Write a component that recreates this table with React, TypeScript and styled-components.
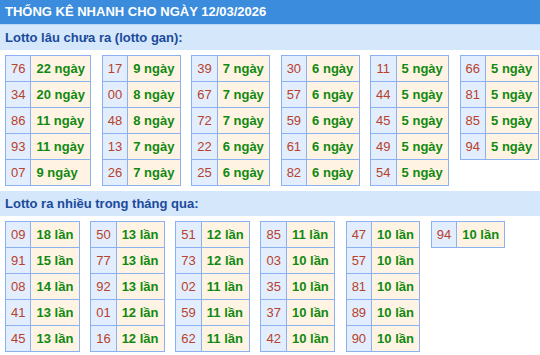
import React from "react";
import styled, { createGlobalStyle } from "styled-components";

const GlobalStyle = createGlobalStyle`
	body {
		margin: 0;
		background: #ffffff;
		font-family: "Liberation Sans", Arial, sans-serif;
	}
`;

type Pair = [string, string];

const ganColumns: Pair[][] = [
	[["76", "22"], ["34", "20"], ["86", "11"], ["93", "11"], ["07", "9"]],
	[["17", "9"], ["00", "8"], ["48", "8"], ["13", "7"], ["26", "7"]],
	[["39", "7"], ["67", "7"], ["72", "7"], ["22", "6"], ["25", "6"]],
	[["30", "6"], ["57", "6"], ["59", "6"], ["61", "6"], ["82", "6"]],
	[["11", "5"], ["44", "5"], ["45", "5"], ["49", "5"], ["54", "5"]],
	[["66", "5"], ["81", "5"], ["85", "5"], ["94", "5"]],
];

const freqColumns: Pair[][] = [
	[["09", "18"], ["91", "15"], ["08", "14"], ["41", "13"], ["45", "13"]],
	[["50", "13"], ["77", "13"], ["92", "13"], ["01", "12"], ["16", "12"]],
	[["51", "12"], ["73", "12"], ["02", "11"], ["59", "11"], ["62", "11"]],
	[["85", "11"], ["03", "10"], ["35", "10"], ["37", "10"], ["42", "10"]],
	[["47", "10"], ["57", "10"], ["81", "10"], ["89", "10"], ["90", "10"]],
	[["94", "10"]],
];

const Page = styled.div`
	width: 540px;
`;

const TitleBar = styled.div`
	height: 24px;
	padding-left: 5px;
	background: #3b8cdd;
	border-bottom: 1px solid #b9d6f5;
	color: #ffffff;
	font-size: 13px;
	font-weight: bold;
	line-height: 24px;
	white-space: nowrap;
`;

const SectionTitle = styled.div`
	height: 25px;
	padding-left: 5px;
	background: #d4e7fb;
	color: #1b4a9c;
	font-size: 13px;
	font-weight: bold;
	line-height: 25px;
`;

const TableRow = styled.div`
	display: flex;
	align-items: flex-start;
	gap: 10.5px;
	padding: 5px;
`;

const Table = styled.table`
	border-collapse: collapse;
	font-size: 13px;
`;

const NumCell = styled.td`
	height: 25px;
	padding: 0 5px;
	border: 1px solid #8cb1f1;
	background: #e2eefe;
	color: #b8412a;
	text-align: center;
	white-space: nowrap;
`;

const ValueCell = styled.td`
	height: 25px;
	padding: 0 5.3px 0 5px;
	border: 1px solid #8cb1f1;
	background: #fff4e3;
	color: #118911;
	font-weight: bold;
	white-space: nowrap;
`;

const StatTables = ({ columns, unit }: { columns: Pair[][]; unit: string }) => (
	<TableRow>
		{columns.map((col, i) => (
			<Table key={i}>
				<tbody>
					{col.map(([num, count]) => (
						<tr key={num}>
							<NumCell>{num}</NumCell>
							<ValueCell>
								{count} {unit}
							</ValueCell>
						</tr>
					))}
				</tbody>
			</Table>
		))}
	</TableRow>
);

const App = () => {
	return (
		<Page>
			<GlobalStyle />
			<TitleBar>THỐNG KÊ NHANH CHO NGÀY 12/03/2026</TitleBar>
			<SectionTitle>Lotto lâu chưa ra (lotto gan):</SectionTitle>
			<StatTables columns={ganColumns} unit="ngày" />
			<SectionTitle>Lotto ra nhiều trong tháng qua:</SectionTitle>
			<StatTables columns={freqColumns} unit="lần" />
		</Page>
	);
};

export default App;
